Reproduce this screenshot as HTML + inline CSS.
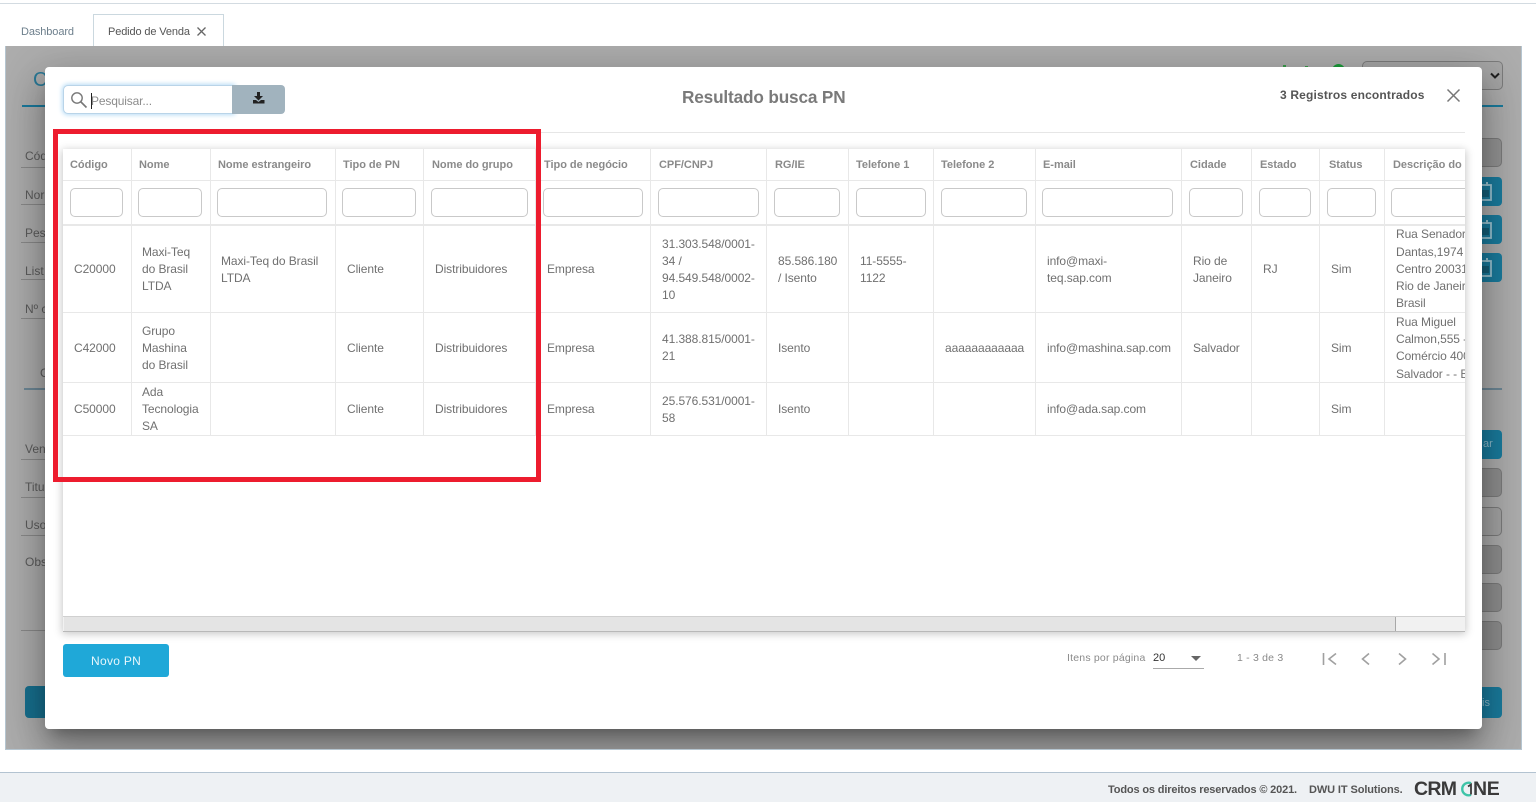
<!DOCTYPE html>
<html><head><meta charset="utf-8"><style>
html,body{margin:0;padding:0;background:#fff}
body{position:relative;width:1536px;height:802px;overflow:hidden;font-family:"Liberation Sans",sans-serif;filter:blur(.35px)}
div,span{position:absolute;box-sizing:border-box}
span{white-space:nowrap}
.t{font-size:12px;line-height:17px;color:#707070;margin-top:1px;letter-spacing:-.08px}
.h{font-size:11px;line-height:14px;color:#8a8a8a;font-weight:bold;top:158px;letter-spacing:-.03px}
.v{width:1px;background:#e8e8e8}
.r{height:1px;background:#e8e8e8;left:63px;width:1402px}
.i{top:188px;height:29px;border:1px solid #c9c9c9;border-radius:5px;background:#fff}
.bg{background:#8f8f8f;border:1px solid #7c7c7c;border-radius:5px;left:1450px;width:52px;height:29px}
.lb{font-size:12px;line-height:14px;color:#5c5c5c;left:25px}
.ln{height:1px;background:#8a8a8a;left:21px;width:30px}
.cal{background:#1a7c9e;border-radius:4px;left:1450px;width:52px;height:29px}
.ci{position:absolute;left:1476px}
</style></head><body>
<div style="left:0;top:3px;width:1536px;height:1px;background:#d3dbe1"></div>
<span style="left:21px;top:25px;font-size:11px;line-height:14px;color:#6d7f8c;letter-spacing:-.1px">Dashboard</span>
<div style="left:93px;top:14px;width:131px;height:33px;background:#fff;border:1px solid #cbd8df;border-bottom:0"></div>
<span style="left:108px;top:25px;font-size:11px;line-height:14px;color:#555;letter-spacing:-.13px">Pedido de Venda</span>
<svg style="position:absolute;left:196px;top:26px" width="11" height="11"><path d="M1.500 1.500l8 8M9.500 1.500l-8 8" stroke="#666" stroke-width="1.300" fill="none"/></svg>

<div style="left:5px;top:46px;width:1517px;height:704px;background:#adadad;border:1px solid #b5c5d0;border-top:0;overflow:hidden">
<div style="left:-6px;top:-46px;width:1536px;height:802px">
<span style="left:33px;top:69px;font-size:20px;line-height:23px;color:#2a7a98">C</span>
<div style="left:22px;top:105px;width:30px;height:2px;background:#1a7a9d"></div>
<span class="lb" style="top:149px">Cód</span><div class="ln" style="top:167px"></div>
<span class="lb" style="top:188px">Nor</span><div class="ln" style="top:204px"></div>
<span class="lb" style="top:226px">Pes</span><div class="ln" style="top:242px"></div>
<span class="lb" style="top:264px">List</span><div class="ln" style="top:279px"></div>
<span class="lb" style="top:302px">Nº c</span><div class="ln" style="top:318px"></div>
<span class="lb" style="top:366px;left:40px">C</span><div style="left:24px;top:388px;width:30px;height:2px;background:#6d8796"></div>
<span class="lb" style="top:442px">Ven</span><div class="ln" style="top:459px"></div>
<span class="lb" style="top:480px">Titu</span><div class="ln" style="top:497px"></div>
<span class="lb" style="top:518px">Uso</span><div class="ln" style="top:535px"></div>
<span class="lb" style="top:555px">Obs</span>
<div class="ln" style="top:630px"></div>
<div style="left:25px;top:686px;width:30px;height:32px;background:#17708f;border-radius:4px"></div>
<div class="bg" style="left:1362px;top:61px;width:141px;height:29px;background:#a6a6a6"></div>
<svg style="position:absolute;left:1490px;top:72px" width="10" height="8"><path d="M1 1.500l4 4 4-4" stroke="#222" stroke-width="2" fill="none"/></svg>
<div style="left:1450px;top:105px;width:53px;height:2px;background:#1a7c9e"></div>
<div class="bg" style="top:138px;background:#949494"></div>
<div class="cal" style="top:177px"></div><div class="cal" style="top:215px"></div><div class="cal" style="top:253px"></div>
<svg class="ci" style="top:181px" width="16" height="22"><rect x="2" y="4" width="13" height="15" fill="#1a7c9e" stroke="#9cc6d4" stroke-width="1.800"/><rect x="5" y="9" width="8" height="7" fill="#145f79"/><path d="M11 1v4" stroke="#9cc6d4" stroke-width="2"/></svg>
<svg class="ci" style="top:219px" width="16" height="22"><rect x="2" y="4" width="13" height="15" fill="#1a7c9e" stroke="#9cc6d4" stroke-width="1.800"/><rect x="5" y="9" width="8" height="7" fill="#145f79"/><path d="M11 1v4" stroke="#9cc6d4" stroke-width="2"/></svg>
<svg class="ci" style="top:257px" width="16" height="22"><rect x="2" y="4" width="13" height="15" fill="#1a7c9e" stroke="#9cc6d4" stroke-width="1.800"/><rect x="5" y="9" width="8" height="7" fill="#145f79"/><path d="M11 1v4" stroke="#9cc6d4" stroke-width="2"/></svg>
<div style="left:1450px;top:388px;width:52px;height:2px;background:#6d8796"></div>
<div class="cal" style="top:430px"></div>
<span style="left:1483px;top:438px;font-size:11px;line-height:13px;color:#8fbccc">ar</span>
<div class="bg" style="top:468px"></div>
<div class="bg" style="top:507px;background:#a4a4a4"></div>
<div class="bg" style="top:545px"></div>
<div class="bg" style="top:583px"></div>
<div class="bg" style="top:621px"></div>
<div class="cal" style="top:687px;height:31px"></div>
<span style="left:1482px;top:697px;font-size:11px;line-height:13px;color:#8fbccc">is</span>
<div style="left:1332px;top:64px;width:13px;height:13px;border:3px solid #1a9a3a;border-radius:50%"></div>
<div style="left:1283px;top:65px;width:3px;height:4px;background:#3a9a4a"></div>
<div style="left:1305px;top:66px;width:3px;height:3px;background:#3a9a4a"></div>
<!-- modal shadow, clipped to the gray area -->
<div style="left:45px;top:67px;width:1437px;height:662px;border-radius:4px;box-shadow:0 11px 15px -7px rgba(0,0,0,.3),0 24px 38px 3px rgba(0,0,0,.2),0 9px 46px 8px rgba(0,0,0,.16)"></div>
</div>
</div>

<!-- modal -->
<div style="left:45px;top:67px;width:1437px;height:662px;background:#fff;border-radius:4px"></div>
<div style="left:63px;top:85px;width:171px;height:29px;background:#fff;border:1px solid #b9d4e8;border-radius:5px 0 0 5px;box-shadow:0 0 5px 1px #b7dcf5"></div>
<svg style="position:absolute;left:70px;top:91px" width="18" height="18"><circle cx="7" cy="7" r="5.200" stroke="#777" stroke-width="1.400" fill="none"/><path d="M11 11l5.500 5.500" stroke="#777" stroke-width="1.600"/></svg>
<div style="left:91px;top:93px;width:1px;height:16px;background:#222"></div>
<span style="left:91px;top:93px;font-size:12px;line-height:16px;color:#8c8c8c;letter-spacing:-.15px">Pesquisar...</span>
<div style="left:232px;top:85px;width:53px;height:29px;background:#a1b3be;border-radius:0 4px 4px 0"></div>
<svg style="position:absolute;left:252px;top:92px" width="14" height="13"><path d="M5 0h3v4h3L6.500 8.500 2 4h3z" fill="#222"/><path d="M1 8h3l2.500 2 2.500-2h3.500v3.500H1z" fill="#222"/></svg>
<span style="left:682px;top:87px;font-size:17.200px;line-height:21px;color:#7a7a7a;font-weight:bold;letter-spacing:-.15px">Resultado busca PN</span>
<span style="left:1280px;top:88px;font-size:12px;line-height:15px;color:#555;font-weight:bold;letter-spacing:.17px">3 Registros encontrados</span>
<svg style="position:absolute;left:1446px;top:88px" width="15" height="15"><path d="M1.500 1.500l12 12M13.500 1.500l-12 12" stroke="#777" stroke-width="1.500" fill="none"/></svg>
<div style="left:63px;top:132px;width:1402px;height:1px;background:#e6e6e6"></div>

<!-- table -->
<div style="left:63px;top:149px;width:1402px;height:482px;background:#fff;box-shadow:0 2px 8px 1px rgba(0,0,0,.22)"></div>
<div class="r" style="top:180px"></div>
<div class="r" style="top:224px;height:2px"></div>
<div class="r" style="top:312px"></div>
<div class="r" style="top:382px"></div>
<div class="r" style="top:435px"></div>
<div class="v" style="left:131px;top:149px;height:286px"></div>
<div class="v" style="left:210px;top:149px;height:286px"></div>
<div class="v" style="left:335px;top:149px;height:286px"></div>
<div class="v" style="left:423px;top:149px;height:286px"></div>
<div class="v" style="left:535px;top:149px;height:286px"></div>
<div class="v" style="left:650px;top:149px;height:286px"></div>
<div class="v" style="left:766px;top:149px;height:286px"></div>
<div class="v" style="left:848px;top:149px;height:286px"></div>
<div class="v" style="left:933px;top:149px;height:286px"></div>
<div class="v" style="left:1035px;top:149px;height:286px"></div>
<div class="v" style="left:1181px;top:149px;height:286px"></div>
<div class="v" style="left:1251px;top:149px;height:286px"></div>
<div class="v" style="left:1319px;top:149px;height:286px"></div>
<div class="v" style="left:1384px;top:149px;height:286px"></div>

<span class="h" style="left:70px">Código</span>
<span class="h" style="left:139px">Nome</span>
<span class="h" style="left:218px">Nome estrangeiro</span>
<span class="h" style="left:343px">Tipo de PN</span>
<span class="h" style="left:432px">Nome do grupo</span>
<span class="h" style="left:544px">Tipo de negócio</span>
<span class="h" style="left:659px">CPF/CNPJ</span>
<span class="h" style="left:775px">RG/IE</span>
<span class="h" style="left:856px">Telefone 1</span>
<span class="h" style="left:941px">Telefone 2</span>
<span class="h" style="left:1043px">E-mail</span>
<span class="h" style="left:1190px">Cidade</span>
<span class="h" style="left:1260px">Estado</span>
<span class="h" style="left:1329px">Status</span>
<span class="h" style="left:1393px">Descrição do</span>

<div class="i" style="left:70px;width:53px"></div>
<div class="i" style="left:138px;width:64px"></div>
<div class="i" style="left:217px;width:110px"></div>
<div class="i" style="left:342px;width:74px"></div>
<div class="i" style="left:431px;width:97px"></div>
<div class="i" style="left:543px;width:100px"></div>
<div class="i" style="left:658px;width:101px"></div>
<div class="i" style="left:774px;width:66px"></div>
<div class="i" style="left:856px;width:70px"></div>
<div class="i" style="left:941px;width:86px"></div>
<div class="i" style="left:1042px;width:131px"></div>
<div class="i" style="left:1189px;width:54px"></div>
<div class="i" style="left:1259px;width:52px"></div>
<div class="i" style="left:1327px;width:49px"></div>
<div class="i" style="left:1391px;width:74px;border-right:0;border-radius:5px 0 0 5px"></div>

<span class="t" style="left:74px;top:260px">C20000</span>
<span class="t" style="left:142px;top:243px">Maxi-Teq</span>
<span class="t" style="left:142px;top:260px">do Brasil</span>
<span class="t" style="left:142px;top:277px">LTDA</span>
<span class="t" style="left:221px;top:252px">Maxi-Teq do Brasil</span>
<span class="t" style="left:221px;top:269px">LTDA</span>
<span class="t" style="left:347px;top:260px">Cliente</span>
<span class="t" style="left:435px;top:260px">Distribuidores</span>
<span class="t" style="left:547px;top:260px">Empresa</span>
<span class="t" style="left:662px;top:235px">31.303.548/0001-</span>
<span class="t" style="left:662px;top:252px">34 /</span>
<span class="t" style="left:662px;top:269px">94.549.548/0002-</span>
<span class="t" style="left:662px;top:286px">10</span>
<span class="t" style="left:778px;top:252px">85.586.180</span>
<span class="t" style="left:778px;top:269px">/ Isento</span>
<span class="t" style="left:860px;top:252px">11-5555-</span>
<span class="t" style="left:860px;top:269px">1122</span>
<span class="t" style="left:1047px;top:252px">info@maxi-</span>
<span class="t" style="left:1047px;top:269px">teq.sap.com</span>
<span class="t" style="left:1193px;top:252px">Rio de</span>
<span class="t" style="left:1193px;top:269px">Janeiro</span>
<span class="t" style="left:1263px;top:260px">RJ</span>
<span class="t" style="left:1331px;top:260px">Sim</span>

<span class="t" style="left:74px;top:339px">C42000</span>
<span class="t" style="left:142px;top:322px">Grupo</span>
<span class="t" style="left:142px;top:339px">Mashina</span>
<span class="t" style="left:142px;top:356px">do Brasil</span>
<span class="t" style="left:347px;top:339px">Cliente</span>
<span class="t" style="left:435px;top:339px">Distribuidores</span>
<span class="t" style="left:547px;top:339px">Empresa</span>
<span class="t" style="left:662px;top:330px">41.388.815/0001-</span>
<span class="t" style="left:662px;top:347px">21</span>
<span class="t" style="left:778px;top:339px">Isento</span>
<span class="t" style="left:945px;top:339px">aaaaaaaaaaaa</span>
<span class="t" style="left:1047px;top:339px">info@mashina.sap.com</span>
<span class="t" style="left:1193px;top:339px">Salvador</span>
<span class="t" style="left:1331px;top:339px">Sim</span>

<span class="t" style="left:74px;top:400px">C50000</span>
<span class="t" style="left:142px;top:383px">Ada</span>
<span class="t" style="left:142px;top:400px">Tecnologia</span>
<span class="t" style="left:142px;top:417px">SA</span>
<span class="t" style="left:347px;top:400px">Cliente</span>
<span class="t" style="left:435px;top:400px">Distribuidores</span>
<span class="t" style="left:547px;top:400px">Empresa</span>
<span class="t" style="left:662px;top:392px">25.576.531/0001-</span>
<span class="t" style="left:662px;top:409px">58</span>
<span class="t" style="left:778px;top:400px">Isento</span>
<span class="t" style="left:1047px;top:400px">info@ada.sap.com</span>
<span class="t" style="left:1331px;top:400px">Sim</span>

<div style="left:1385px;top:225px;width:80px;height:158px;overflow:hidden">
<span class="t" style="left:11px;top:0">Rua Senador</span>
<span class="t" style="left:11px;top:18px">Dantas,1974</span>
<span class="t" style="left:11px;top:35px">Centro 20031</span>
<span class="t" style="left:11px;top:52px">Rio de Janeiro</span>
<span class="t" style="left:11px;top:69px">Brasil</span>
<span class="t" style="left:11px;top:88px">Rua Miguel</span>
<span class="t" style="left:11px;top:105px">Calmon,555 -</span>
<span class="t" style="left:11px;top:122px">Comércio 400</span>
<span class="t" style="left:11px;top:140px">Salvador - - BA</span>
</div>

<!-- scrollbar -->
<div style="left:63px;top:616px;width:1402px;height:16px;background:#f1f1f1;border-top:1px solid #d0d0d0"></div>
<div style="left:64px;top:617px;width:1332px;height:14px;background:#e4e4e4;border-right:1px solid #a8a8a8"></div>
<div style="left:63px;top:631px;width:1402px;height:1px;background:#b8b8b8"></div>

<div style="left:63px;top:644px;width:106px;height:33px;background:#1fa8d8;border-radius:3px"></div>
<span style="left:91px;top:654px;font-size:12px;line-height:15px;color:#e6f6fc;letter-spacing:.3px">Novo PN</span>

<span style="left:1067px;top:651px;font-size:10.500px;line-height:14px;color:#8a8a8a;letter-spacing:.2px">Itens por página</span>
<span style="left:1153px;top:651px;font-size:11px;line-height:14px;color:#333">20</span>
<svg style="position:absolute;left:1191px;top:656px" width="10" height="5"><path d="M0 0h10L5 5z" fill="#666"/></svg>
<div style="left:1153px;top:668px;width:51px;height:1px;background:#aaa"></div>
<span style="left:1237px;top:651px;font-size:10.500px;line-height:14px;color:#8a8a8a;letter-spacing:.2px">1 - 3 de 3</span>
<svg style="position:absolute;left:1320px;top:650px" width="126" height="18" fill="none" stroke="#a0a0a0" stroke-width="1.600"><path d="M3.500 3v12M16 3.500 9 9l7 5.500M49 3.500 42.500 9l6.500 5.500M79 3.500 85.500 9 79 14.500M112.500 3.500 119 9l-6.500 5.500M125 3v12"/></svg>

<!-- red rectangle -->
<div style="left:53px;top:129px;width:488px;height:353px;border:5px solid #ed1c2e"></div>

<!-- footer -->
<div style="left:0;top:772px;width:1536px;height:30px;background:#eef1f4;border-top:1px solid #b3c3d1"></div>
<span style="left:1108px;top:783px;font-size:11px;line-height:14px;color:#555;font-weight:bold;letter-spacing:-.15px">Todos os direitos reservados © 2021.</span>
<span style="left:1309px;top:783px;font-size:11px;line-height:14px;color:#555;font-weight:bold;letter-spacing:-.1px">DWU IT Solutions.</span>
<span style="left:1414px;top:779px;font-size:19.500px;line-height:20px;color:#3a3a3a;font-weight:bold;letter-spacing:-.7px">CRM</span>
<svg style="position:absolute;left:1460px;top:781px" width="16" height="16" fill="none"><path d="M11 2.200A6.300 6.300 0 1 0 11 13.800" stroke="#3fc4a8" stroke-width="2.400"/><path d="M8 5.500l3-2v10" stroke="#3a3a3a" stroke-width="1.800"/></svg>
<span style="left:1473px;top:779px;font-size:19.500px;line-height:20px;color:#3a3a3a;font-weight:bold;letter-spacing:-.3px">NE</span>
</body></html>
